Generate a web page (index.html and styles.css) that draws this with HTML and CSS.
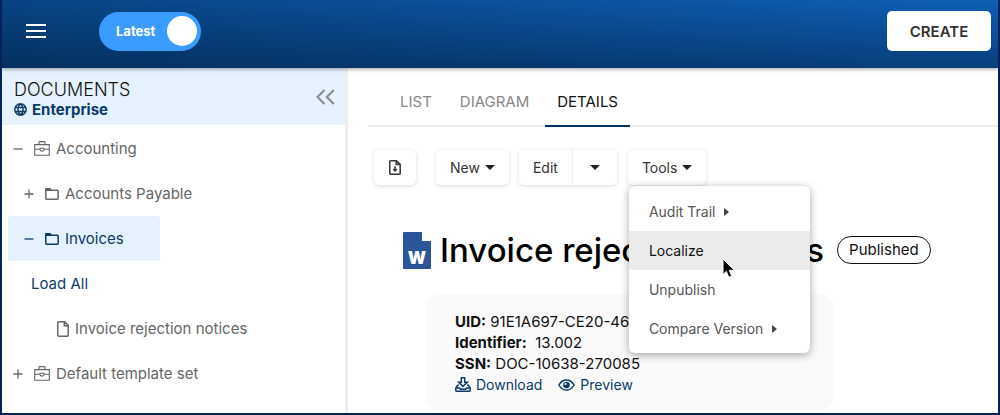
FILE: index.html
```html
<!DOCTYPE html>
<html lang="en">
  <head>
    <meta charset="UTF-8" />
    <meta name="viewport" content="width=device-width, initial-scale=1.0" />
    <title>Documents</title>
    <link rel="stylesheet" href="styles.css">
  </head>
  <body>
    <svg class="sprite" aria-hidden="true">
      <symbol id="minus" viewBox="0 0 10 10"><path d="M0.5 5h9" /></symbol>
      <symbol id="plus" viewBox="0 0 10 10"><path d="M0.5 5h9M5 0.5v9" /></symbol>
      <symbol id="case" viewBox="0 0 16 16">
        <path d="M0.7 3.6h14.6v10.7H0.7zM5 3.4V1.3q0-.7.7-.7h4.6q.7 0 .7.7v2.1M0.7 8.2h5.1M10.2 8.2h5.1M6 7.2h4v1.4q0 1.5-2 1.5t-2-1.5z" />
      </symbol>
      <symbol id="folder" viewBox="0 0 14 12">
        <path d="M0.8 2.3h11.5q.9 0 .9.9v7.1q0 .9-.9.9H1.7q-.9 0-.9-.9z" />
        <path class="solid" d="M0 3V1q0-1 1-1h4q.8 0 1.1.7L7 3z" />
      </symbol>
    </svg>

    <header class="topbar">
      <button class="menu-btn" aria-label="Menu"><span></span><span></span><span></span></button>
      <label class="latest">
        Latest
        <input type="checkbox" role="switch" checked />
      </label>
      <button class="create-btn">CREATE</button>
    </header>

    <div class="layout">
      <aside class="sidebar">
        <div class="sidebar-head">
          <div class="sidebar-title">
            <h2>DOCUMENTS</h2>
            <a class="enterprise" href="#">
              <svg width="13" height="13" viewBox="0 0 13 13"><path d="M6.5.8a5.7 5.7 0 1 0 0 11.4a5.7 5.7 0 1 0 0-11.4zM6.5.8c-3.4 3-3.4 8.4 0 11.4c3.4-3 3.4-8.4 0-11.4zM1.2 4.6h10.6M1.2 8.4h10.6" /></svg>
              Enterprise
            </a>
          </div>
          <button class="collapse-btn" aria-label="Collapse sidebar">
            <svg width="19" height="16" viewBox="0 0 19 16"><path d="M8.500 1L1.500 8l7 7M17.800 1l-7 7l7 7" /></svg>
          </button>
        </div>
        <ul class="tree">
          <li>
            <a class="root" href="#"><svg class="sign"><use href="#minus" /></svg><svg class="case"><use href="#case" /></svg>Accounting</a>
          </li>
          <li>
            <a class="child" href="#"><svg class="sign"><use href="#plus" /></svg><svg class="folder"><use href="#folder" /></svg>Accounts Payable</a>
          </li>
          <li>
            <a class="child active" href="#"><svg class="sign"><use href="#minus" /></svg><svg class="folder"><use href="#folder" /></svg>Invoices</a>
          </li>
          <li><a class="load-all" href="#">Load All</a></li>
          <li>
            <a class="leaf" href="#"><svg class="page" viewBox="0 0 12 16"><path d="M1.7.8h6l3.5 3.5v10q0 .9-.9.9H1.7q-.9 0-.9-.9V1.7q0-.9.9-.9zM7.3.8v3.9h3.9" /></svg>Invoice rejection notices</a>
          </li>
          <li>
            <a class="root" href="#"><svg class="sign"><use href="#plus" /></svg><svg class="case"><use href="#case" /></svg>Default template set</a>
          </li>
        </ul>
      </aside>

      <main class="content">
        <nav class="tabs">
          <a href="#">LIST</a>
          <a href="#">DIAGRAM</a>
          <a class="active" href="#">DETAILS</a>
        </nav>

        <div class="toolbar">
          <button class="btn icon-btn" aria-label="Export">
            <svg width="12" height="15" viewBox="0 0 12 15"><path d="M1.7.8h5.6l3.900 3.600v9q0 .8-.9.8H1.700q-.9 0-.9-.9V1.700q0-.9.9-.9zM7.200.8v3.700h4" /><path d="M6 6.200v4.500M4.200 9L6 10.900L7.800 9" /></svg>
          </button>
          <button class="btn">New<span class="caret"></span></button>
          <div class="split">
            <button class="btn">Edit</button>
            <button class="btn" aria-label="More edit options"><span class="caret"></span></button>
          </div>
          <div class="dropdown">
            <button class="btn" aria-expanded="true">Tools<span class="caret"></span></button>
            <div class="menu">
              <button>Audit Trail<span class="caret-right"></span></button>
              <button class="hover">Localize</button>
              <button>Unpublish</button>
              <button>Compare Version<span class="caret-right"></span></button>
              <svg class="cursor" width="14" height="21" viewBox="0 0 14 21"><path d="M1 1v15.500l3.300-3.100l2.500 5.900l2.900-1.200l-2.500-5.800H12.500z" /></svg>
            </div>
          </div>
        </div>

        <div class="title-row">
          <svg class="word" width="28" height="37" viewBox="0 0 28 37">
            <path d="M1 0h18v9h9v27q0 1-1 1H1q-1 0-1-1V1q0-1 1-1z" />
            <text x="14" y="32" text-anchor="middle">W</text>
          </svg>
          <h1>Invoice rejection notices</h1>
          <span class="badge">Published</span>
        </div>

        <section class="info">
          <p><b>UID:</b> 91E1A697-CE20-467</p>
          <p><b>Identifier:</b>&nbsp; 13.002</p>
          <p><b>SSN:</b> DOC-10638-270085</p>
          <div class="links">
            <a href="#">
              <svg width="16" height="15" viewBox="0 0 16 15"><path d="M6.3.8h3.4v4.400h2.600L8 9.400L3.700 5.200h2.600zM4 8.300H2.600L.8 11v2.500q0 .7.7.7h13q.7 0 .7-.7V11l-1.800-2.700H12M1 11h3.500l1 1.300h5l1-1.300H15" /></svg>
              Download
            </a>
            <a href="#">
              <svg width="17" height="12" viewBox="0 0 17 12"><path d="M.9 6Q3.800.9 8.500.9T16.100 6Q13.200 11.100 8.500 11.100T.9 6z" /><circle class="pupil" cx="8.500" cy="6" r="3.300" /><circle class="glint" cx="7.500" cy="5" r="1.100" /></svg>
              Preview
            </a>
          </div>
        </section>
      </main>
    </div>
  </body>
</html>
```
FILE: styles.css
```css
* {
  box-sizing: border-box;
}
body {
  margin: 0;
  min-height: 100vh;
  display: flex;
  flex-direction: column;
  font-family: Inter, "Liberation Sans", sans-serif;
  font-size: 15px;
  color: #111;
  background-color: #fff;
  border: 2px solid #03215a;
  border-top: none;
}
h1,
h2,
p {
  margin: 0;
}
a {
  color: inherit;
  text-decoration: none;
}
button {
  font-family: inherit;
  font-size: 15px;
  color: inherit;
  border: none;
  background: none;
  cursor: pointer;
}
svg {
  flex-shrink: 0;
  fill: none;
  stroke: currentColor;
  stroke-width: 1.5;
}
.sprite {
  display: none;
}
.solid {
  fill: currentColor;
  stroke: none;
}

/* top bar */
.topbar {
  position: relative;
  display: flex;
  align-items: center;
  height: 68px;
  padding: 0 7px 6px 24px;
  background: linear-gradient(to bottom, rgba(0, 20, 45, 0) 0%, rgba(0, 20, 45, 0.42) 100%),
    linear-gradient(to right, #084484, #0e5fb6);
  box-shadow: 0 1px 4px rgba(0, 0, 0, 0.4);
}
.menu-btn {
  display: flex;
  flex-direction: column;
  gap: 4px;
  padding: 0;
}
.menu-btn span {
  width: 20px;
  height: 2px;
  background-color: #fff;
}
.latest {
  display: flex;
  align-items: center;
  justify-content: space-between;
  width: 102px;
  height: 39px;
  margin-left: 53px;
  padding: 0 4px 0 17px;
  border-radius: 20px;
  background-color: #3b9cff;
  color: #fff;
  font-size: 13px;
  font-weight: 700;
}
.latest input {
  appearance: none;
  width: 30px;
  height: 30px;
  margin: 0;
  border-radius: 50%;
  background-color: #fff;
}
.create-btn {
  margin-left: auto;
  width: 104px;
  height: 40px;
  border-radius: 5px;
  background-color: #fff;
  color: #333;
  font-weight: 600;
}

.layout {
  flex: 1;
  display: flex;
}

/* sidebar */
.sidebar {
  width: 35%;
  max-width: 346px;
  border-right: 3px solid #eee;
}
.sidebar-head {
  display: flex;
  justify-content: space-between;
  align-items: center;
  height: 57px;
  padding: 0 10px 0 12px;
  background-color: #e5f1fe;
}
.sidebar-title {
  padding-top: 4px;
}
.sidebar-title h2 {
  font-size: 18px;
  font-weight: 300;
  line-height: 22px;
}
.enterprise {
  display: flex;
  align-items: center;
  gap: 5px;
  line-height: 18px;
  font-weight: 700;
  color: #0b3b69;
}
.collapse-btn {
  display: flex;
  padding: 0;
  color: #888;
}
.collapse-btn svg {
  stroke-width: 2;
}
.tree {
  display: flex;
  flex-direction: column;
  align-items: flex-start;
  margin: 0;
  padding: 1px 6px 0;
  list-style: none;
  color: #666;
}
.tree a {
  display: flex;
  align-items: center;
  height: 45px;
}
.tree .root {
  padding-left: 5px;
}
.tree .child {
  padding: 0 36px 0 16px;
}
.tree .load-all {
  padding-left: 23px;
  color: #0b3b69;
}
.tree .leaf {
  padding-left: 49px;
}
.tree .active {
  border-radius: 3px;
  background-color: #e5f1fe;
  color: #0b3b69;
}
.sign {
  width: 10px;
  height: 10px;
  margin-right: 11px;
  stroke-width: 1.3;
}
.case {
  width: 16px;
  height: 16px;
  margin-right: 6px;
  stroke-width: 1.1;
}
.folder {
  width: 14px;
  height: 12px;
  margin-right: 6px;
}
.page {
  width: 12px;
  height: 16px;
  margin-right: 6px;
}

/* main area */
.content {
  flex: 1;
  min-width: 0;
}
.tabs {
  display: flex;
  gap: 4px;
  margin-left: 20px;
  padding-left: 20px;
  border-bottom: 2px solid #eee;
  color: #888;
}
.tabs a {
  padding: 23px 12px 13px;
  line-height: 21px;
  margin-bottom: -2px;
  border-bottom: 2px solid transparent;
}
.tabs .active {
  color: #111;
  border-color: #03305c;
}
.toolbar {
  display: flex;
  align-items: center;
  padding: 23px 26px 0;
}
.btn {
  display: flex;
  align-items: center;
  gap: 5px;
  height: 35px;
  padding: 0 14px;
  border-radius: 5px;
  background-color: #fff;
  color: #333;
  font-size: 14px;
  box-shadow: 0 1px 4px rgba(0, 0, 0, 0.15);
}
.icon-btn {
  margin-right: 20px;
  padding: 0 15px;
}
.split {
  display: flex;
  margin: 0 11px 0 10px;
  border-radius: 5px;
  box-shadow: 0 1px 4px rgba(0, 0, 0, 0.15);
}
.split .btn {
  box-shadow: none;
}
.split .btn + .btn {
  padding: 0 17px;
  border-left: 1px solid #eee;
  border-radius: 0 5px 5px 0;
}
.caret {
  border: 5px solid transparent;
  border-top-color: #222;
  border-bottom: none;
}
.dropdown {
  position: relative;
}
.menu {
  position: absolute;
  top: 36px;
  left: 1px;
  width: 181px;
  padding: 6px 0 5px;
  border-radius: 6px;
  background-color: #fff;
  box-shadow: 0 2px 8px rgba(0, 0, 0, 0.35);
}
.menu button {
  display: flex;
  align-items: center;
  gap: 9px;
  width: 100%;
  height: 39px;
  padding: 0 20px;
  font-size: 14px;
  color: #555;
}
.menu .hover {
  background-color: #ebebeb;
  color: #111;
}
.caret-right {
  border: 4px solid transparent;
  border-left: 5px solid #444;
  border-right: none;
}
.cursor {
  position: absolute;
  top: 72px;
  left: 93px;
  fill: #000;
  stroke: #fff;
  stroke-width: 1;
}
.title-row {
  display: flex;
  align-items: center;
  gap: 9px;
  padding: 42px 0 0 55px;
}
.title-row h1 {
  margin-right: 4px;
  color: #000;
  font-size: 33px;
  font-weight: 500;
  line-height: 46px;
  white-space: nowrap;
}
.word {
  fill: #2b579a;
  stroke: none;
}
.word text {
  fill: #fff;
  font-size: 17px;
  font-weight: 900;
}
.badge {
  padding: 0 11px;
  border: 1px solid #111;
  border-radius: 14px;
  line-height: 26px;
}
.info {
  max-width: 407px;
  margin: 21px 0 2px 78px;
  padding: 17px 29px 16px;
  border-radius: 14px;
  background-color: #fafafa;
  line-height: 21px;
}
.links {
  display: flex;
  gap: 16px;
  font-size: 14px;
  color: #0b3b69;
}
.links a {
  display: flex;
  align-items: center;
  gap: 5px;
}
.pupil {
  fill: currentColor;
  stroke: none;
}
.glint {
  fill: #fafafa;
  stroke: none;
}
```
